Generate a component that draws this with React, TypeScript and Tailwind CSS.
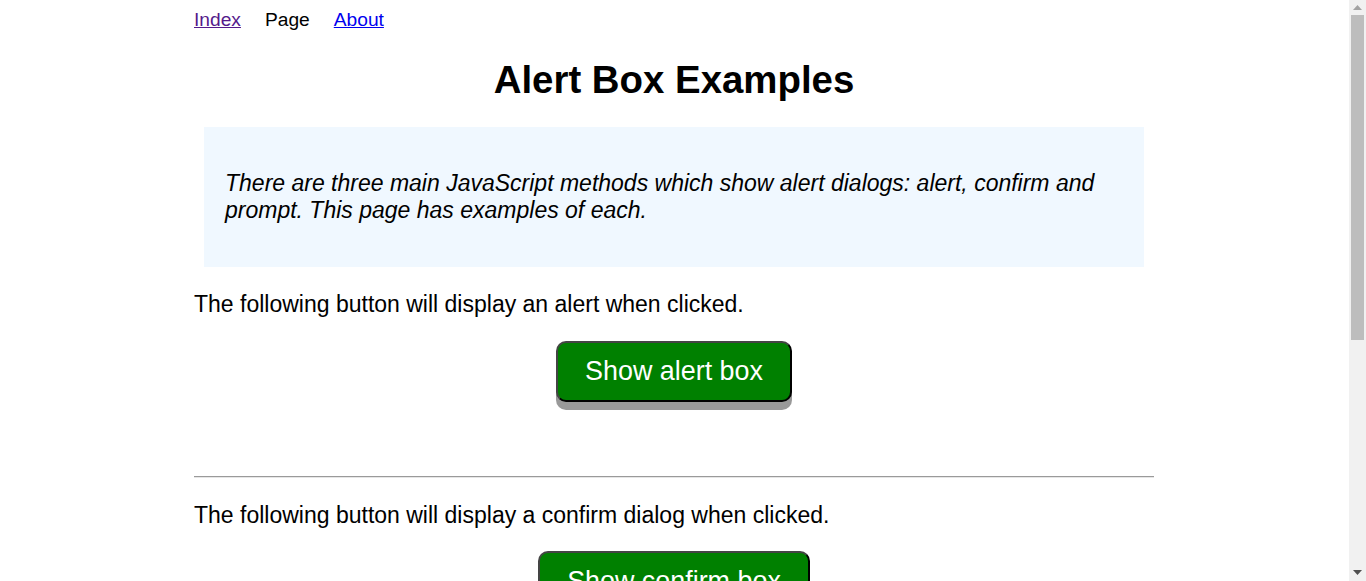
const SECTIONS = [
    { text: 'The following button will display an alert when clicked.', label: 'Show alert box' },
    { text: 'The following button will display a confirm dialog when clicked.', label: 'Show confirm box' },
    { text: 'The following button will display a prompt dialog when clicked.', label: 'Show prompt box' },
];

function GreenButton({ label }: { label: string }) {
    return (
        <button
            type="button"
            className="rounded-[10px] border-2 border-[#444] border-r-black border-b-black bg-[#008000] px-[27px] py-[12px] text-[26.9px] leading-[33px] text-white shadow-[0_8px_0_#999]"
        >
            {label}
        </button>
    );
}

// the window's classic scrollbar, as in the screenshot
function ScrollBar() {
    return (
        <div className="flex w-[17px] shrink-0 flex-col items-center bg-[#f1f1f1]">
            <div className="flex h-[15px] w-full items-center justify-center">
                <svg width="9" height="5" viewBox="0 0 9 5"><path d="M0 5 L4.5 0 L9 5 Z" fill="#a3a3a3" /></svg>
            </div>
            <div className="h-[325px] w-[13px] bg-[#bdbdbd]" />
            <div className="flex-1" />
            <div className="flex h-[17px] w-full items-center justify-center">
                <svg width="9" height="5" viewBox="0 0 9 5"><path d="M0 0 L9 0 L4.5 5 Z" fill="#505050" /></svg>
            </div>
        </div>
    );
}

export default function App() {
    return (
        <div className="flex h-screen bg-white text-black" style={{ fontFamily: '"Liberation Sans", Arial, sans-serif' }}>
            <div className="min-w-0 flex-1 overflow-hidden pr-px">
                <div className="mx-auto w-[960px] pb-10">
                    <nav className="flex gap-[24px] pt-[9px] text-[19.2px] leading-[22px]">
                        <a href="#" className="text-[#551a8b] underline">Index</a>
                        <span>Page</span>
                        <a href="#" className="text-[#0000ee] underline">About</a>
                    </nav>

                    <h1 className="mt-[27px] text-center text-[38.4px] font-bold leading-[44px]">Alert Box Examples</h1>

                    <blockquote className="mx-[10px] mt-[25px] bg-[#f0f8ff] px-[21px] py-[43px]">
                        <p className="text-[23px] italic leading-[27px]">
                            There are three main JavaScript methods which show alert dialogs: alert, confirm and
                            prompt. This page has examples of each.
                        </p>
                    </blockquote>

                    {SECTIONS.map((s, i) => (
                        <section key={s.label}>
                            {i > 0 && <hr className="mt-[74px] border-t border-b border-t-[#9a9a9a] border-b-[#e6e6e6]" />}
                            <p className="mt-[24px] text-[23px] leading-[27px]">{s.text}</p>
                            <div className={`${i > 0 ? 'mt-[22px]' : 'mt-[23px]'} flex justify-center`}>
                                <GreenButton label={s.label} />
                            </div>
                        </section>
                    ))}
                </div>
            </div>
            <ScrollBar />
        </div>
    );
}
